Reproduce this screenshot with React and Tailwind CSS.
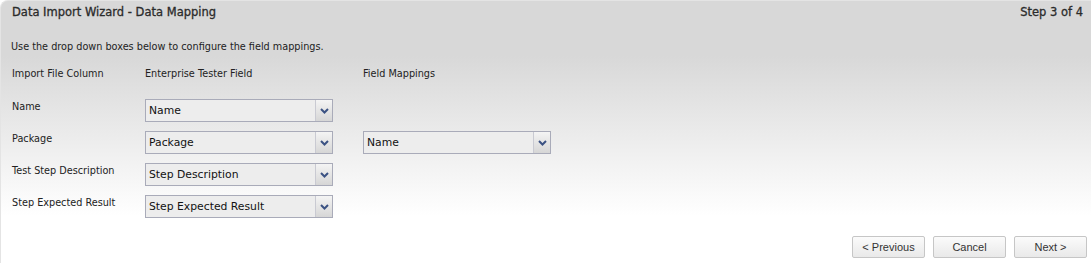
import React from 'react'

const rows = [
    { label: "Name", field: "Name", mapping: null },
    { label: "Package", field: "Package", mapping: "Name" },
    { label: "Test Step Description", field: "Step Description", mapping: null },
    { label: "Step Expected Result", field: "Step Expected Result", mapping: null },
];

const DropDown = ({ value }) => {
    return (
        <div className="flex h-[23px] w-[188px] border border-[#a9abb9] bg-[#ededed]">
            <div className="flex-1 pl-[3px] pt-[4px] text-[10.8px] leading-[14px] text-[#111]">{value}</div>
            <div className="flex w-[17px] items-center justify-center border-l border-[#c9cad2] bg-gradient-to-b from-[#f4f4f4] to-[#d6d6d6]">
                <svg width="9" height="6" viewBox="0 0 9 6">
                    <path d="M1 1 L4.5 4.5 L8 1" fill="none" stroke="#3b5283" strokeWidth="2" />
                </svg>
            </div>
        </div>
    )
}

const Button = ({ children }) => (
    <button className="h-[22px] w-[73px] rounded-[2px] border border-[#c6c6c6] bg-gradient-to-b from-[#fbfbfb] to-[#e9e9e9] text-[11px] text-[#333] font-['Liberation_Sans',Arial,sans-serif]">
        {children}
    </button>
)

const App = () => {
    return (
        <div className="h-[263px] w-[1091px] overflow-hidden bg-white">
            <div className="flex h-full flex-col rounded-tl-[8px] border-l border-t border-[#e4e4e4] bg-[linear-gradient(to_bottom,#d8d8d8_0px,#d8d8d8_55px,#ffffff_215px)] font-['DejaVu_Sans',Verdana,sans-serif] text-[#222]">
                <div className="flex items-center justify-between pl-[11px] pr-[8px] pt-[3px] text-[11.5px] text-[#2b2b2b]">
                    <span className="[-webkit-text-stroke:0.3px_#2b2b2b]">Data Import Wizard - Data Mapping</span>
                    <span className="[-webkit-text-stroke:0.3px_#2b2b2b]">Step 3 of 4</span>
                </div>
                <p className="mt-[19px] pl-[10px] text-[9.7px] leading-[14px]">Use the drop down boxes below to configure the field mappings.</p>
                <div className="mt-[13px] grid grid-cols-[133px_218px_auto] pl-[11px] text-[9.7px] leading-[14px]">
                    <div>Import File Column</div>
                    <div>Enterprise Tester Field</div>
                    <div>Field Mappings</div>
                </div>
                <div className="mt-[18px] flex flex-col gap-[9px] pl-[11px]">
                    {rows.map((r) => (
                        <div key={r.label} className="grid grid-cols-[133px_218px_auto] items-start">
                            <div className="pt-[1px] text-[9.7px] leading-[14px]">{r.label}</div>
                            <DropDown value={r.field} />
                            {r.mapping ? <DropDown value={r.mapping} /> : <div />}
                        </div>
                    ))}
                </div>
                <div className="mt-auto flex justify-end gap-[8px] pb-[5px] pr-[4px]">
                    <Button>&lt; Previous</Button>
                    <Button>Cancel</Button>
                    <Button>Next &gt;</Button>
                </div>
            </div>
        </div>
    )
}

export default App
